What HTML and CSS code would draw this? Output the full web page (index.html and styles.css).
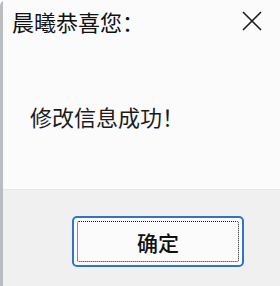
FILE: index.html
```html
<!DOCTYPE html>
<html lang="zh">
<head>
  <meta charset="UTF-8">
  <title>提示</title>
  <link rel="stylesheet" href="styles.css">
</head>
<body>
  <div class="dialog">
    <div class="content">
      <div class="titlebar">
        <span class="title">晨曦恭喜您：</span>
        <svg class="close" width="20" height="20" viewBox="0 0 20 20">
          <path d="M1 1 L19 19 M19 1 L1 19" stroke="#1a1a1a" stroke-width="1.6" fill="none"/>
        </svg>
      </div>
      <p class="message">修改信息成功！</p>
    </div>
    <div class="footer">
      <button class="ok"><span class="focus">确定</span></button>
    </div>
  </div>
</body>
</html>
```

FILE: styles.css
```css
body {
  margin: 0;
  font-family: "Noto Sans CJK SC", "Noto Sans", sans-serif;
  background-color: #ffffff;
}
.dialog {
  width: 280px;
  height: 286px;
  display: flex;
  flex-direction: column;
  border-left: 3px solid #b9bcc0;
  border-top-left-radius: 6px;
  box-sizing: border-box;
}
.content {
  height: 190px;
  background-color: #fbfbfc;
  border-bottom: 1px solid #e6e7e9;
  box-sizing: border-box;
}
.titlebar {
  display: flex;
  justify-content: space-between;
  align-items: center;
  padding: 7px 18px 0 9px;
}
.title {
  font-size: 22px;
  line-height: 28px;
  color: #111;
  font-weight: 400;
}
.close {
  margin-top: 0;
}
.message {
  margin: 67px 0 0 27px;
  font-size: 22px;
  line-height: 28px;
  color: #1c1c1c;
}
.footer {
  flex: 1;
  background-color: #f0f0f1;
  display: flex;
  justify-content: flex-end;
  padding: 26px 36px 0 0;
  box-sizing: border-box;
}
.ok {
  width: 172px;
  height: 51px;
  padding: 3px;
  border: 2px solid #2f74c9;
  border-radius: 5px;
  background-color: #fbfbfb;
  box-sizing: border-box;
  font-family: inherit;
}
.focus {
  display: flex;
  align-items: center;
  justify-content: center;
  height: 100%;
  border: 1px dotted #1a1a1a;
  border-radius: 2px;
  box-sizing: border-box;
  font-size: 21px;
  font-weight: 500;
  color: #111;
}
```
